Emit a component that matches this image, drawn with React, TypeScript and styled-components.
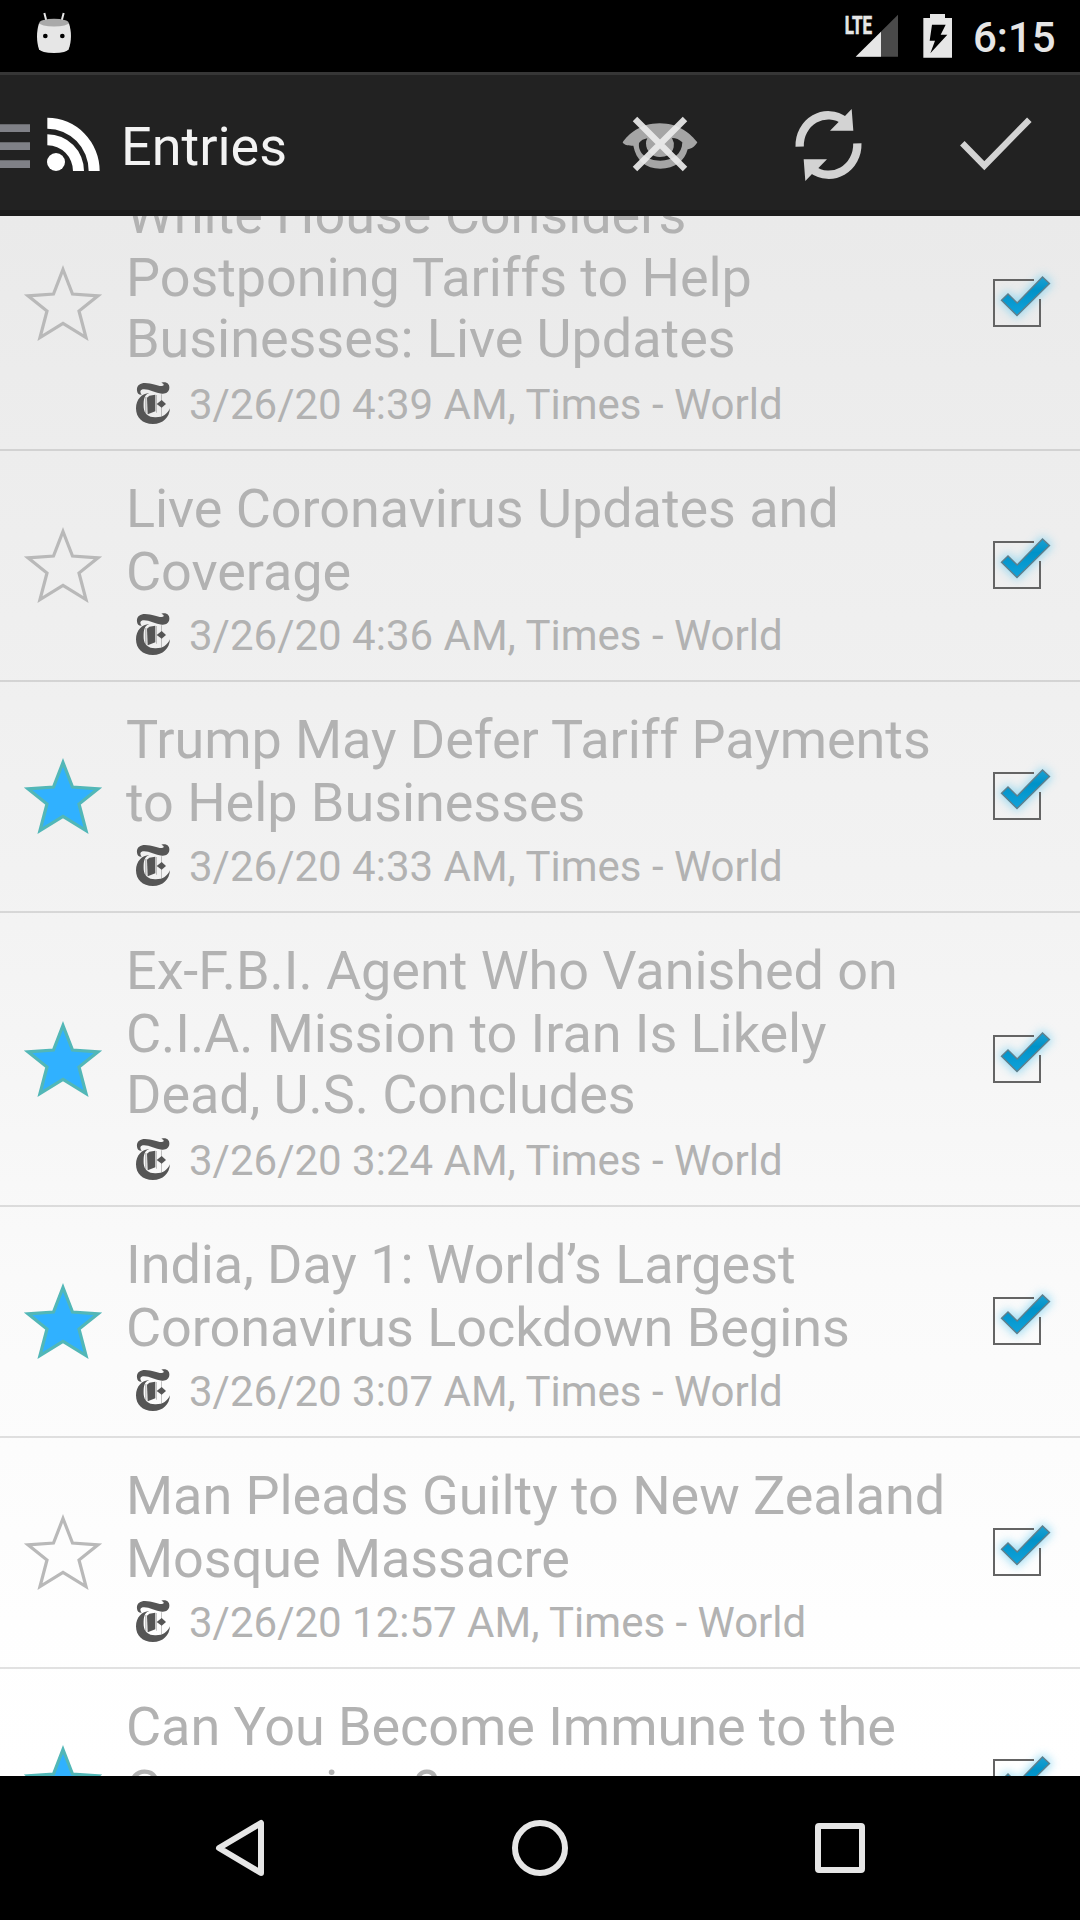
import React from "react";
import styled, { createGlobalStyle } from "styled-components";

const Global = createGlobalStyle`
  *, *::before, *::after { box-sizing: border-box; }
  body { margin: 0; background: #000; font-family: Roboto, "Liberation Sans", sans-serif; }
  svg { display: block; flex: none; }
`;

const Screen = styled.div`
  width: 1080px;
  height: 1920px;
  display: flex;
  flex-direction: column;
  overflow: hidden;
  background: #000;
`;

const StatusBar = styled.header`
  height: 72px;
  flex: none;
  display: flex;
  justify-content: space-between;
  background: #000;
`;

const StatusRight = styled.div`
  display: flex;
  width: 260px;
`;

const Clock = styled.span`
  width: 107px;
  padding-top: 13px;
  font-size: 42px;
  line-height: 49px;
  font-weight: 500;
  color: #e6e6e6;
  white-space: nowrap;
`;

const ActionBar = styled.div`
  height: 144px;
  flex: none;
  display: flex;
  border-top: 3px solid #363636;
  border-bottom: 6px solid #1b1b1b;
  background: #222;
`;

const BarTitle = styled.h1`
  flex: 1;
  margin: 0;
  padding-top: 40px;
  font-size: 54px;
  line-height: 63px;
  font-weight: 400;
  color: #f3f3f3;
`;

const ActionButton = styled.button`
  width: 168px;
  height: 135px;
  padding: 0;
  border: 0;
  background: none;
`;

const ListPane = styled.main`
  height: 1560px;
  flex: none;
  overflow: hidden;
  background: linear-gradient(#eaeaea, #ededed 15%, #f2f2f2 42%, #f7f7f7 59%, #fafafa 68%, #fefefe 90%, #ffffff);
`;

const List = styled.ul`
  margin: -59px 0 0;
  padding: 0;
  list-style: none;
`;

const Row = styled.li<{ $short: boolean }>`
  display: flex;
  align-items: center;
  border-bottom: 2px solid rgba(0, 0, 0, 0.115);

  > svg {
    margin-bottom: ${(p) => (p.$short ? 1 : 0)}px;
  }
`;

const RowText = styled.div`
  flex: 1;
  padding: 26px 0 20px;
  white-space: nowrap;
`;

const Title = styled.div`
  margin-bottom: 8px;
  font-size: 54px;
  letter-spacing: -0.06px;
  color: #b2b2b2;
`;

const TitleLine = styled.div<{ $tight: boolean }>`
  line-height: ${(p) => (p.$tight ? 59 : 63)}px;
  padding-bottom: ${(p) => (p.$tight ? 4 : 0)}px;
`;

const Meta = styled.div`
  display: flex;
  align-items: center;
  gap: 19px;
  height: 49px;
  padding-left: 10px;
  font-size: 42px;
  line-height: 49px;
  color: #b2b2b2;

  > svg {
    margin-bottom: 3px;
  }
`;

const NavBar = styled.nav`
  height: 144px;
  flex: none;
  display: flex;
  justify-content: center;
  background: #000;
`;

const NavButton = styled.button`
  width: 300px;
  height: 144px;
  padding: 0;
  border: 0;
  background: none;
`;

const RobotIcon = () => (
  <svg width="108" height="72" viewBox="0 0 324 216">
    <path d="M133 39L140 66M191 39L184 66" stroke="#e6e6e6" strokeWidth="6" />
    <path d="M117 70C109 95 109 125 117 148Q124 159 162 159T206 148C215 125 215 95 207 70Z" fill="#e6e6e6" />
    <ellipse cx="162" cy="68" rx="44" ry="11.500" fill="#a9a9a9" />
    <circle cx="136" cy="108" r="7" />
    <circle cx="187" cy="108" r="7" />
  </svg>
);

const SignalBattery = () => (
  <svg width="153" height="72" viewBox="0 0 459 216">
    <text x="74" y="101" fontSize="79" fontWeight="700" fill="#e6e6e6" stroke="#e6e6e6" strokeWidth="2" textLength="82" lengthAdjust="spacingAndGlyphs">LTE</text>
    <path d="M107 170L234 44V170Z" fill="#4a4a4a" />
    <path d="M107 170L183 95V170Z" fill="#e6e6e6" />
    <path d="M310 54H330V42H375V54H396V173H310Z" fill="#e6e6e6" />
    <path d="M336 74H377L362 104H382L331 160L345 122H329Z" fill="#000" />
  </svg>
);

const DrawerAndFeedIcon = () => (
  <svg width="121" height="135" viewBox="0 225 363 405">
    <path d="M0 373H90V396H0ZM0 427H90V450H0ZM0 481H90V504H0Z" fill="#808187" />
    <g fill="#fff">
      <circle cx="168" cy="486" r="27" />
      <path d="M142 403A110 110 0 0 1 252 513H219A77 77 0 0 0 142 436Z" />
      <path d="M142 353A158 160 0 0 1 299 513H266A124 127 0 0 0 142 386Z" />
    </g>
  </svg>
);

const HideReadIcon = () => (
  <svg width="168" height="135" viewBox="-12 -15 504 405">
    <path
      fillRule="evenodd"
      fill="#a5a5a5"
      d="M128 187C145 163 180 130 239 130S333 163 352 187C345 199 334 207 323 208C314 243 285 266 241 266S168 240 160 197C148 198 132 196 128 187ZM177 189C173 220 202 242 241 242S306 222 307 187C298 178 288 174 276 174Q284 188 281 202C276 223 259 231 240 231C216 231 198 214 198 190Q198 182 202 175C191 177 183 181 177 189Z"
    />
    <path d="M165 117L315 267M315 117L165 267" stroke="#ececec" strokeOpacity=".92" strokeWidth="19" />
  </svg>
);

const RefreshIcon = () => (
  <svg width="168" height="135" viewBox="492 -15 504 405">
    <g id="half">
      <path d="M659 200A86 91 0 0 1 794 122" fill="none" stroke="#d3d3d3" strokeWidth="25" />
      <path d="M815 87L820 152H750L775 127L795 108Z" fill="#d3d3d3" />
    </g>
    <use href="#half" transform="rotate(180 745.500 195)" />
  </svg>
);

const DoneIcon = () => (
  <svg width="168" height="135" viewBox="996 -15 504 405">
    <path d="M1147 190L1213 257L1348 119" fill="none" stroke="#d3d3d3" strokeWidth="19" />
  </svg>
);

const Star = ({ on }: { on: boolean }) => (
  <svg width="126" height="100" viewBox="0 253 126 100">
    <path
      d="M63 269.500L72.500 294L98 295.800L79 311L86 337.500L63 323.300L40 337.500L47 311L28 295.800L53.500 294Z"
      fill={on ? "#30b1ff" : "none"}
      stroke={on ? "#52b7b7" : "#b9b9b9"}
      strokeWidth="3.200"
      strokeMiterlimit="10"
    />
  </svg>
);

const NewspaperMark = () => (
  <svg width="34" height="42" viewBox="408 423 102 126">
    <g fill="#555">
      <path d="M411 449C409 434 420 426 435 426C457 426 473 436 486 435C494 434 492 428 484 425C499 420 509 428 508 441C507 454 497 459 486 458C465 456 444 442 428 445C420 447 419 454 425 461C417 462 412 457 411 449Z" />
      <path d="M448 456C429 461 431 484 431 499C432 519 446 529 465 529C487 530 502 520 510 502C508 530 489 549 459 549C427 549 408 530 408 502C408 475 426 457 448 456Z" />
      <path d="M441 470L448 464L466 461V511L443 520Z" />
      <path d="M470 489L485 477L498 489L485 500Z" />
      <path d="M484 460H486V526H484ZM436 468H439V517H436ZM469 462H471V515H469Z" opacity=".5" />
    </g>
  </svg>
);

const CheckBox = () => (
  <svg width="120" height="120" viewBox="0 3 120 120">
    <defs>
      <linearGradient id="tick" x1="0" y1="0" x2="0" y2="1">
        <stop offset="0" stopColor="#1ba0d2" />
        <stop offset=".35" stopColor="#0092c8" />
        <stop offset="1" stopColor="#10a2da" />
      </linearGradient>
      <filter id="glow" x="-40%" y="-50%" width="180%" height="200%">
        <feGaussianBlur stdDeviation="5" />
      </filter>
    </defs>
    <path d="M41 60L48 53.500L57.500 63L82.500 36.500L90 43.500L57 76Z" fill="#83d3f1" stroke="#83d3f1" strokeWidth="4" opacity=".8" filter="url(#glow)" />
    <path d="M74 40H34V86H80V59" fill="none" stroke="#646464" strokeWidth="2" />
    <path d="M41.500 60.300L48 54L57.200 63L82.500 37L89.500 43.500L57 75.500Z" fill="url(#tick)" stroke="#5f7f8c" strokeWidth="1.400" />
  </svg>
);

type Entry = { lines: string[]; meta: string; starred: boolean };

const entries: Entry[] = [
  { lines: ["White House Considers", "Postponing Tariffs to Help", "Businesses: Live Updates"], meta: "3/26/20 4:39 AM, Times - World", starred: false },
  { lines: ["Live Coronavirus Updates and", "Coverage"], meta: "3/26/20 4:36 AM, Times - World", starred: false },
  { lines: ["Trump May Defer Tariff Payments", "to Help Businesses"], meta: "3/26/20 4:33 AM, Times - World", starred: true },
  { lines: ["Ex-F.B.I. Agent Who Vanished on", "C.I.A. Mission to Iran Is Likely", "Dead, U.S. Concludes"], meta: "3/26/20 3:24 AM, Times - World", starred: true },
  { lines: ["India, Day 1: World’s Largest", "Coronavirus Lockdown Begins"], meta: "3/26/20 3:07 AM, Times - World", starred: true },
  { lines: ["Man Pleads Guilty to New Zealand", "Mosque Massacre"], meta: "3/26/20 12:57 AM, Times - World", starred: false },
  { lines: ["Can You Become Immune to the", "Coronavirus?"], meta: "3/26/20 12:41 AM, Times - World", starred: true },
];

export default function App() {
  return (
    <Screen>
      <Global />
      <StatusBar>
        <RobotIcon />
        <StatusRight>
          <SignalBattery />
          <Clock>6:15</Clock>
        </StatusRight>
      </StatusBar>
      <ActionBar>
        <DrawerAndFeedIcon />
        <BarTitle>Entries</BarTitle>
        <ActionButton aria-label="Hide read"><HideReadIcon /></ActionButton>
        <ActionButton aria-label="Refresh"><RefreshIcon /></ActionButton>
        <ActionButton aria-label="Mark all read"><DoneIcon /></ActionButton>
      </ActionBar>
      <ListPane>
        <List>
          {entries.map((e) => (
            <Row key={e.lines[0]} $short={e.lines.length === 2}>
              <Star on={e.starred} />
              <RowText>
                <Title>
                  {e.lines.map((l, i) => (
                    <TitleLine key={l} $tight={i === 2}>{l}</TitleLine>
                  ))}
                </Title>
                <Meta>
                  <NewspaperMark />
                  <span>{e.meta}</span>
                </Meta>
              </RowText>
              <CheckBox />
            </Row>
          ))}
        </List>
      </ListPane>
      <NavBar>
        <NavButton aria-label="Back">
          <svg width="300" height="144" viewBox="90 1776 300 144">
            <path d="M261 1823V1873L219 1848Z" fill="none" stroke="#e6e6e6" strokeWidth="6" strokeLinejoin="round" />
          </svg>
        </NavButton>
        <NavButton aria-label="Home">
          <svg width="300" height="144" viewBox="390 1776 300 144">
            <circle cx="540" cy="1848" r="25" fill="none" stroke="#e6e6e6" strokeWidth="6" />
          </svg>
        </NavButton>
        <NavButton aria-label="Recent apps">
          <svg width="300" height="144" viewBox="690 1776 300 144">
            <rect x="818" y="1826" width="44" height="44" rx="1" fill="none" stroke="#e6e6e6" strokeWidth="6" strokeLinejoin="round" />
          </svg>
        </NavButton>
      </NavBar>
    </Screen>
  );
}
